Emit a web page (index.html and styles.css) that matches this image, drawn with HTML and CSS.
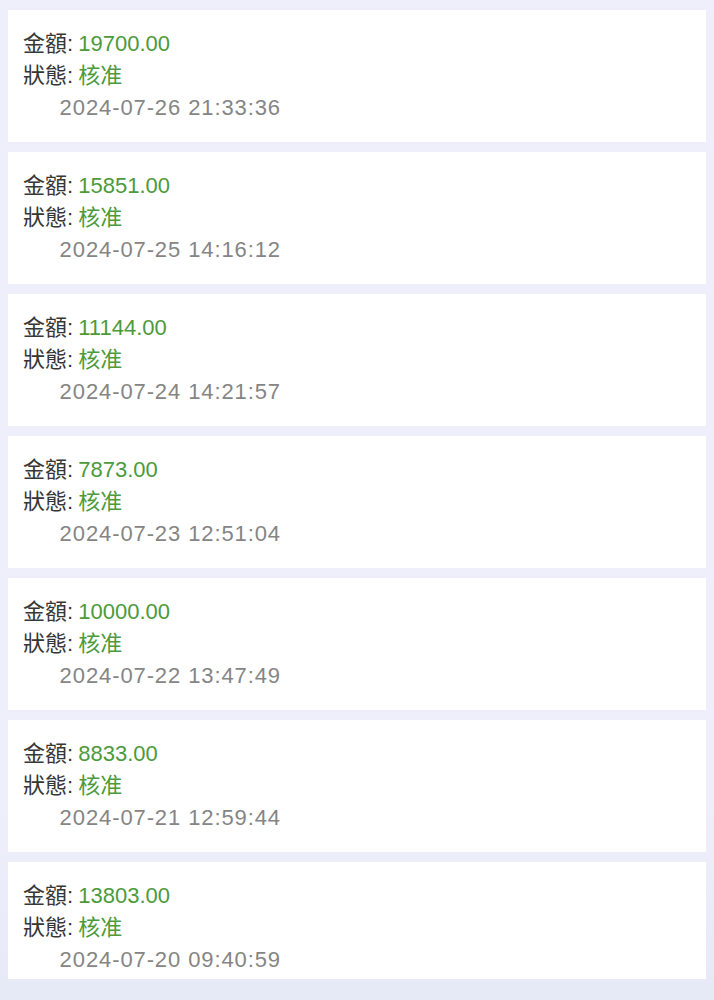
FILE: index.html
```html
<!DOCTYPE html>
<html lang="zh">
<head>
<meta charset="utf-8">
<link rel="stylesheet" href="styles.css">
</head>
<body>
<div class="list">
  <div class="card">
    <div class="row"><span class="label">金額:</span> <span class="value">19700.00</span></div>
    <div class="row"><span class="label">狀態:</span> <span class="value">核准</span></div>
    <div class="date">2024-07-26 21:33:36</div>
  </div>
  <div class="card">
    <div class="row"><span class="label">金額:</span> <span class="value">15851.00</span></div>
    <div class="row"><span class="label">狀態:</span> <span class="value">核准</span></div>
    <div class="date">2024-07-25 14:16:12</div>
  </div>
  <div class="card">
    <div class="row"><span class="label">金額:</span> <span class="value">11144.00</span></div>
    <div class="row"><span class="label">狀態:</span> <span class="value">核准</span></div>
    <div class="date">2024-07-24 14:21:57</div>
  </div>
  <div class="card">
    <div class="row"><span class="label">金額:</span> <span class="value">7873.00</span></div>
    <div class="row"><span class="label">狀態:</span> <span class="value">核准</span></div>
    <div class="date">2024-07-23 12:51:04</div>
  </div>
  <div class="card">
    <div class="row"><span class="label">金額:</span> <span class="value">10000.00</span></div>
    <div class="row"><span class="label">狀態:</span> <span class="value">核准</span></div>
    <div class="date">2024-07-22 13:47:49</div>
  </div>
  <div class="card">
    <div class="row"><span class="label">金額:</span> <span class="value">8833.00</span></div>
    <div class="row"><span class="label">狀態:</span> <span class="value">核准</span></div>
    <div class="date">2024-07-21 12:59:44</div>
  </div>
  <div class="card card-last">
    <div class="row"><span class="label">金額:</span> <span class="value">13803.00</span></div>
    <div class="row"><span class="label">狀態:</span> <span class="value">核准</span></div>
    <div class="date">2024-07-20 09:40:59</div>
  </div>
</div>
</body>
</html>
```

FILE: styles.css
```css
html, body {
  margin: 0;
  padding: 0;
}
body {
  width: 714px;
  height: 1000px;
  overflow: hidden;
  background: linear-gradient(180deg, #efeffc 0%, #eeeffb 80%, #e6e9f6 100%);
  font-family: "Liberation Sans", Arial, "Noto Sans CJK TC", sans-serif;
}
.list {
  display: flex;
  flex-direction: column;
  gap: 10px;
  padding: 10px 8px 0 8px;
}
.card {
  background: #ffffff;
  height: 132px;
  box-sizing: border-box;
  padding: 18px 15px 0 15px;
}
.card-last {
  height: 117px;
}
.row, .date {
  height: 32px;
  line-height: 32px;
  font-size: 22px;
  white-space: nowrap;
}
.row .value {
  margin-left: -1px;
}
.label {
  color: #363636;
}
.value {
  color: #4c9a3a;
}
.date {
  width: 258px;
  text-align: right;
  color: #858585;
  letter-spacing: 0.9px;
}
```
